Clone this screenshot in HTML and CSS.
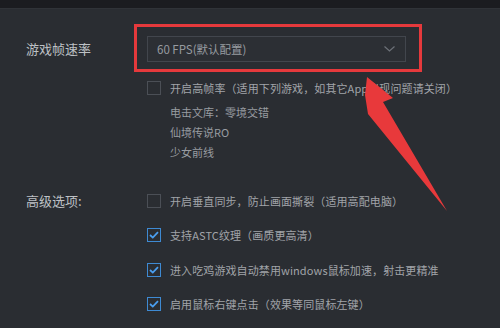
FILE: index.html
```html
<!DOCTYPE html>
<html lang="zh-CN">
<head>
<meta charset="utf-8">
<link rel="stylesheet" href="styles.css">
</head>
<body>
<div class="topbar"></div>
<main class="settings">
  <section class="row">
    <div class="label label-select">游戏帧速率</div>
    <div class="field">
      <div class="select-wrap">
        <div class="select">
          <span class="select-text">60 FPS(默认配置)</span>
          <svg class="chevron" width="11" height="6" viewBox="0 0 11 6"><path d="M0.5 0.5 L5.5 5 L10.5 0.5" fill="none" stroke="#6d7178" stroke-width="1.2"/></svg>
        </div>
      </div>
      <div class="check first-check">
        <span class="box"></span>
        <span class="check-text">开启高帧率（适用下列游戏，如其它App出现问题请关闭）</span>
      </div>
      <ul class="games">
        <li>电击文库：零境交错</li>
        <li>仙境传说RO</li>
        <li>少女前线</li>
      </ul>
    </div>
  </section>
  <section class="row advanced">
    <div class="label label-check">高级选项:</div>
    <div class="field list">
      <div class="check">
        <span class="box"></span>
        <span class="check-text">开启垂直同步，防止画面撕裂（适用高配电脑）</span>
      </div>
      <div class="check">
        <span class="box checked"><svg width="10" height="8" viewBox="0 0 10 8"><path d="M1 4 L3.8 6.6 L9 1.2" fill="none" stroke="#4a9ef0" stroke-width="1.8"/></svg></span>
        <span class="check-text">支持ASTC纹理（画质更高清）</span>
      </div>
      <div class="check">
        <span class="box checked"><svg width="10" height="8" viewBox="0 0 10 8"><path d="M1 4 L3.8 6.6 L9 1.2" fill="none" stroke="#4a9ef0" stroke-width="1.8"/></svg></span>
        <span class="check-text">进入吃鸡游戏自动禁用windows鼠标加速，射击更精准</span>
      </div>
      <div class="check">
        <span class="box checked"><svg width="10" height="8" viewBox="0 0 10 8"><path d="M1 4 L3.8 6.6 L9 1.2" fill="none" stroke="#4a9ef0" stroke-width="1.8"/></svg></span>
        <span class="check-text">启用鼠标右键点击（效果等同鼠标左键）</span>
      </div>
    </div>
  </section>
</main>
<svg class="arrow" width="500" height="328" viewBox="0 0 500 328">
  <polygon points="367,77 393,98 383,102 447,211 368,114 365,95" fill="#e8393b"/>
</svg>
</body>
</html>
```

FILE: styles.css
```css
* { box-sizing: border-box; }
html, body { margin: 0; padding: 0; }
body {
  width: 500px;
  height: 328px;
  overflow: hidden;
  background: #2a2d32;
  font-family: "Noto Sans CJK SC", "Noto Sans", sans-serif;
  position: relative;
}
.topbar {
  height: 9px;
  background: #1b1c20;
  border-bottom: 1px solid #303338;
}
.settings {
  padding: 27px 0 0 26px;
}
.row {
  display: grid;
  grid-template-columns: 121px 1fr;
  align-items: start;
}
.label {
  font-size: 13px;
  color: #bec1c5;
  white-space: nowrap;
}
.label-select { line-height: 26px; }
.label-check { line-height: 14px; }
.field { display: flex; flex-direction: column; }
.select-wrap {
  position: relative;
  width: 259px;
}
.select-wrap::after {
  content: "";
  position: absolute;
  left: -13px;
  top: -12px;
  right: -16px;
  bottom: -10px;
  border: 3px solid #e5393c;
}
.select {
  height: 26px;
  border: 1px solid #42464d;
  background: #2c2f34;
  display: flex;
  align-items: center;
  justify-content: space-between;
  padding: 0 10px 0 9px;
}
.select-text {
  font-size: 11.5px;
  color: #979ba0;
  white-space: nowrap;
}
.chevron { display: block; }
.check {
  display: flex;
  align-items: center;
  gap: 9px;
  height: 14px;
}
.first-check { margin-top: 19px; }
.box {
  width: 14px;
  height: 14px;
  border: 1px solid #4b4f56;
  flex: none;
  display: flex;
  align-items: center;
  justify-content: center;
}
.box.checked { border-color: #3e8ad3; }
.box svg { display: block; }
.check-text {
  font-size: 11px;
  color: #a1a4a9;
  white-space: nowrap;
  letter-spacing: 0.1px;
}
.games {
  list-style: none;
  margin: 7px 0 0 0;
  padding: 0 0 0 23px;
}
.games li {
  font-size: 11px;
  line-height: 20px;
  color: #989ca1;
}
.advanced { margin-top: 32px; }
.list { gap: 20.3px; }
.arrow {
  position: absolute;
  left: 0;
  top: 0;
  pointer-events: none;
}
```
